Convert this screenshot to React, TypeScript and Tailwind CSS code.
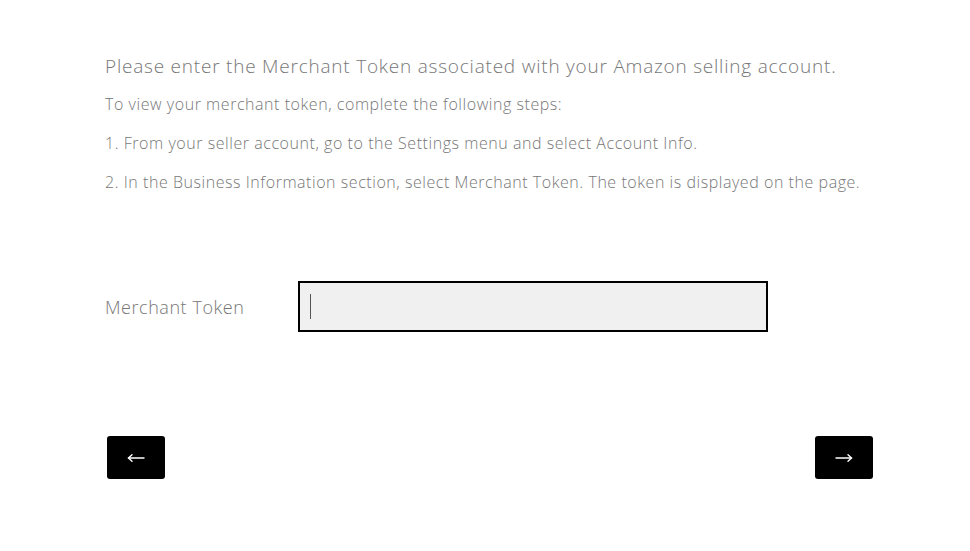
import React from 'react';

const font = { fontFamily: '"Open Sans", "Noto Sans", sans-serif' };

function Arrow({ dir }: { dir: 'left' | 'right' }) {
  return (
    <svg width="18" height="10" viewBox="0 0 18 10" fill="none" stroke="white" strokeWidth="1.4" strokeLinecap="round">
      {dir === 'left' ? (
        <>
          <line x1="1.5" y1="5" x2="17" y2="5" />
          <polyline points="5,1.8 1.5,5 5,8.2" />
        </>
      ) : (
        <>
          <line x1="1" y1="5" x2="16.5" y2="5" />
          <polyline points="13,1.8 16.5,5 13,8.2" />
        </>
      )}
    </svg>
  );
}

export default function App() {
  return (
    <div className="min-h-[551px] w-[970px] bg-white font-light text-[#777]" style={font}>
      <div className="pl-[105px] pr-[60px] pt-[53px]">
        <p className="whitespace-nowrap text-[19px] leading-[26px] tracking-[0.78px]">
          Please enter the Merchant Token associated with your Amazon selling account.
        </p>
        <p className="mt-[14px] whitespace-nowrap text-[16px] leading-[23px] tracking-[0.55px]">
          To view your merchant token, complete the following steps:
        </p>
        <p className="mt-[16px] whitespace-nowrap text-[16px] leading-[23px] tracking-[0.55px]">
          1. From your seller account, go to the Settings menu and select Account Info.
        </p>
        <p className="mt-[16px] whitespace-nowrap text-[16px] leading-[23px] tracking-[0.55px]">
          2. In the Business Information section, select Merchant Token. The token is displayed on the page.
        </p>

        {/* token input */}
        <div className="mt-[87px] flex items-center">
          <label className="w-[193px] pt-[2px] text-[18px] tracking-[0.55px]">Merchant Token</label>
          <div className="relative">
            <input
              type="text"
              className="block h-[51px] w-[470px] border-2 border-black bg-[#f0f0f0] px-3 caret-transparent outline-none"
            />
            <span className="pointer-events-none absolute left-[12px] top-[13px] h-[25px] w-px bg-[#555]" />
          </div>
        </div>

        {/* nav buttons */}
        <div className="mt-[104px] flex w-[770px] items-center justify-between pl-[2px] pr-[2px]">
          <button type="button" className="flex h-[43px] w-[58px] items-center justify-center rounded-[3px] bg-black">
            <Arrow dir="left" />
          </button>
          <button type="button" className="flex h-[43px] w-[58px] items-center justify-center rounded-[3px] bg-black">
            <Arrow dir="right" />
          </button>
        </div>
      </div>
    </div>
  );
}
